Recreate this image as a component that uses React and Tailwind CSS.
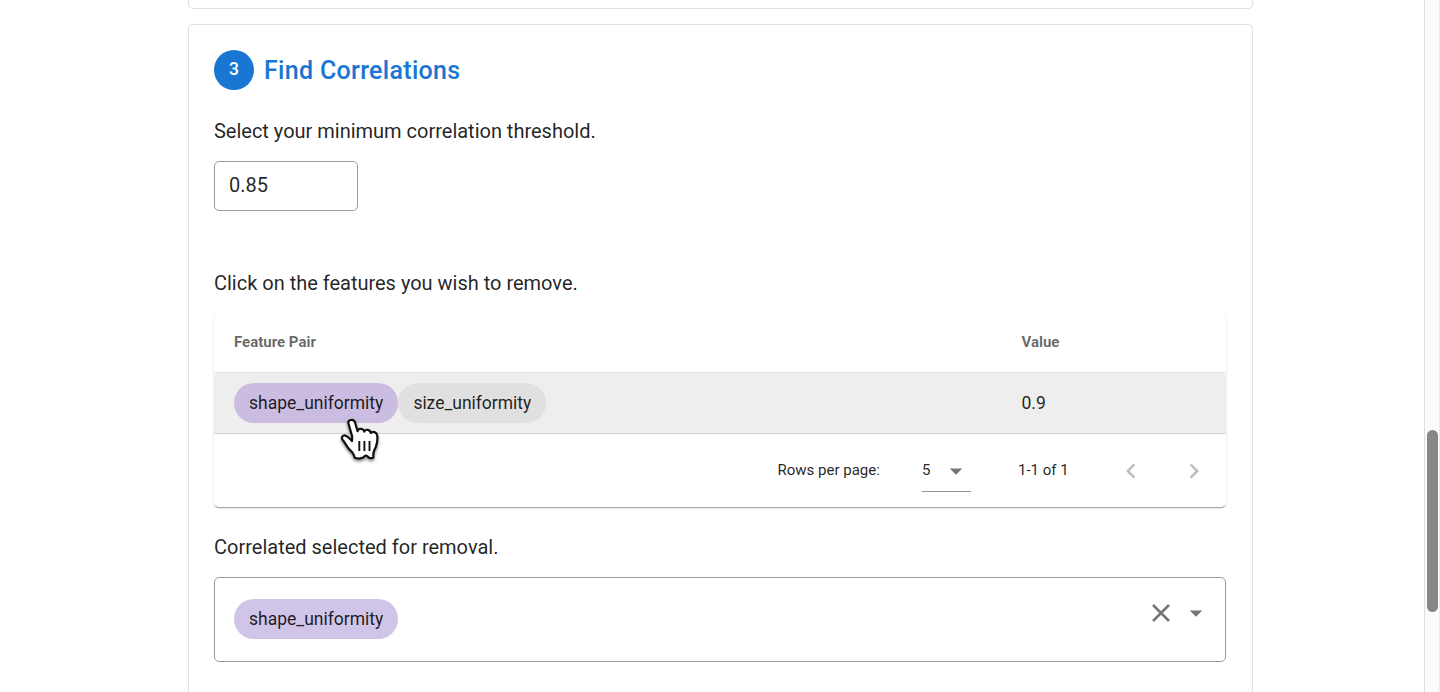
import React from "react";

function Chip({ children, className }) {
  return (
    <span className={`flex h-10 items-center rounded-full px-[15px] text-[17.5px] whitespace-nowrap text-black/87 ${className}`}>
      {children}
    </span>
  );
}

function Caret({ className }) {
  return (
    <svg viewBox="0 0 24 24" className={`h-[30px] w-[30px] fill-[#757575] ${className}`}>
      <path d="M7,10L12,15L17,10H7Z" />
    </svg>
  );
}

function HandCursor() {
  return (
    <svg viewBox="0 0 44 48" className="absolute top-[44px] left-[126px] h-12 w-11 drop-shadow-[0_2px_1.5px_rgba(0,0,0,0.45)]">
      <path
        d="M8.4 6.2C7.6 3.2 13.2 .9 15 5.2L17.6 14.2C18 11.2 23.4 11 24.3 14.6C25.4 11.8 30 12.2 30.9 16C32.6 13.8 36.8 15 37.3 18.8C37.6 23 37.2 26.4 36 29.5C34.8 32.5 33.3 34.4 33.3 37.5V40.4C31 41.6 29 41.4 27.6 39.4Q25.2 37.6 23.2 40.6C20.5 41.8 17 41.6 14.6 40.8C14.4 37.2 12.4 35.2 9.6 32.6C6.8 30 5.6 26.4 3.3 23.8C.2 20.4 3 17.2 6.4 19C8.5 20.2 10 22 12 24L12.2 19.6Z"
        fill="#fff"
        stroke="#111"
        strokeWidth="2.2"
        strokeLinejoin="round"
      />
      <path d="M19.3 24V34M24.4 24V34M29.5 24V34" stroke="#111" strokeWidth="1.9" />
    </svg>
  );
}

function FeatureTable() {
  return (
    <div className="mt-[15px] flex h-[194px] flex-col rounded-[5px] bg-white shadow-[0_2px_1px_-1px_rgba(0,0,0,0.2),0_1px_1px_rgba(0,0,0,0.14),0_1px_3px_rgba(0,0,0,0.12)]">
      <div className="flex h-[60px] items-center border-b border-black/12 px-5 text-[15px] font-bold text-black/60">
        <div className="w-[787.5px]">Feature Pair</div>
        <div>Value</div>
      </div>
      <div className="relative flex h-[61px] items-center rounded-t-[5px] border-b border-black/12 bg-[#eee] px-5">
        <div className="flex w-[787.5px] items-center">
          <Chip className="bg-[#cbbce1]">shape_uniformity</Chip>
          <Chip className="w-[148px] bg-[#e0e0e0] tracking-[-0.02px]">size_uniformity</Chip>
        </div>
        <div className="text-[17.5px] text-black/87">0.9</div>
        <HandCursor />
      </div>
      <div className="flex h-[73px] items-center pl-[563.5px] text-[15px] text-black/87">
        <div className="w-[144.5px]">Rows per page:</div>
        <div className="mt-[1px] flex h-[42px] w-[49px] items-center border-b border-[#949494]">
          <span className="w-[19px]">5</span>
          <Caret className="shrink-0" />
        </div>
        <div className="ml-[47px] w-[98px]">1-1 of 1</div>
        <svg viewBox="0 0 24 24" className="h-[30px] w-[30px] fill-[#bdbdbd]">
          <path d="M15.41,16.58L10.83,12L15.41,7.41L14,6L8,12L14,18L15.41,16.58Z" />
        </svg>
        <svg viewBox="0 0 24 24" className="ml-[33px] h-[30px] w-[30px] fill-[#bdbdbd]">
          <path d="M8.59,16.58L13.17,12L8.59,7.41L10,6L16,12L10,18L8.59,16.58Z" />
        </svg>
      </div>
    </div>
  );
}

export default function App() {
  return (
    <div className="flex h-[692px] overflow-hidden bg-white font-[Roboto,sans-serif] text-black/87">
      <main className="flex flex-1 flex-col pl-[188px]">
        <div className="h-[9px] w-[1065px] shrink-0 rounded-b-[5px] border border-t-0 border-[#e0e0e0]" />
        <section className="mt-[15px] w-[1065px] flex-1 rounded-t-[5px] border border-b-0 border-[#e0e0e0] pt-[25px] pr-[26px] pl-[25px]">
          <header className="flex h-10 items-center">
            <div className="flex h-10 w-10 items-center justify-center rounded-full bg-[#1976d2] pb-0.5 text-[17.5px] font-medium text-white">3</div>
            <h2 className="mt-0.5 ml-2.5 text-[25px] leading-10 font-medium tracking-[0.31px] text-[#1976d2]">Find Correlations</h2>
          </header>
          <p className="mt-[26px] text-[20px] leading-[30px] tracking-[-0.01px]">Select your minimum correlation threshold.</p>
          <div className="mt-[15px] flex h-[50px] w-36 items-center rounded-[5px] border border-[#9a9a9a] px-3.5 pb-[2px] text-[20px]">0.85</div>
          <p className="mt-[57px] text-[20px] leading-[30px] tracking-[-0.01px]">Click on the features you wish to remove.</p>
          <FeatureTable />
          <p className="mt-[25px] text-[20px] leading-[30px]">Correlated selected for removal.</p>
          <div className="mt-[15px] flex h-[85px] items-center rounded-[5px] border border-[#9a9a9a] pr-3.5 pl-[19px]">
            <Chip className="mb-px bg-[#d1c4e9]">shape_uniformity</Chip>
            <svg viewBox="0 0 30 30" className="mb-[13px] ml-auto h-[30px] w-[30px]">
              <path d="M7 7L23 23M23 7L7 23" stroke="#757575" strokeWidth="2.5" />
            </svg>
            <Caret className="mb-[13px] ml-[5px]" />
          </div>
        </section>
      </main>
      <aside className="flex w-4 flex-col border-r border-l border-r-[#ededed] border-l-[#dedede] bg-[#fafafa] pt-[430px] pl-0.5">
        <div className="h-[182px] w-[11px] rounded-full bg-[#878787]" />
      </aside>
    </div>
  );
}
